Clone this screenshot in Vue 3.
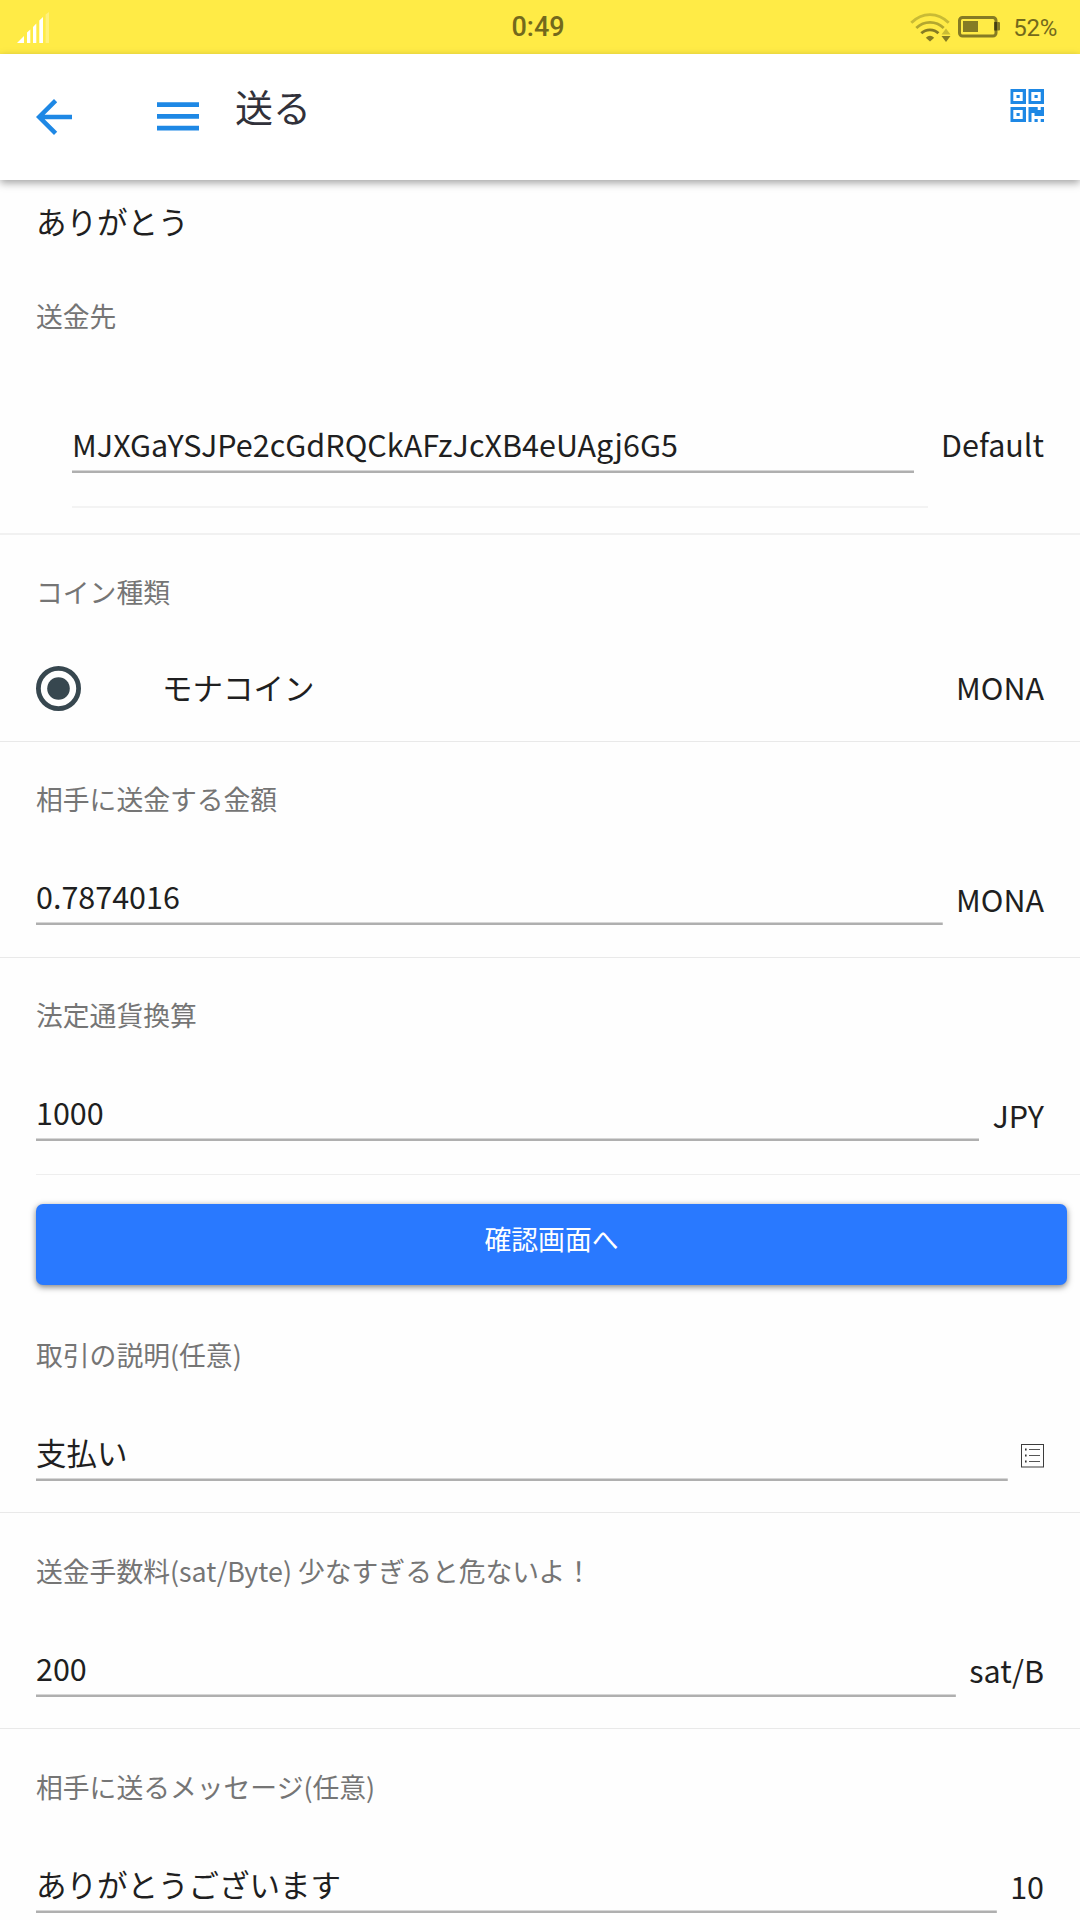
<script setup>
const more = [
  { label: '取引の説明(任意)', value: '支払い', icon: true },
  { label: '送金手数料(sat/Byte) 少なすぎると危ないよ！', value: '200', unit: 'sat/B' },
  { label: '相手に送るメッセージ(任意)', value: 'ありがとうございます', unit: '10' },
]
const amounts = [
  { label: '相手に送金する金額', value: '0.7874016', unit: 'MONA' },
  { label: '法定通貨換算', value: '1000', unit: 'JPY', inset: true },
]
</script>

<template>
  <div class="page">
    <div class="status">
      <svg class="signal" width="34" height="32" viewBox="0 0 34 32">
        <g fill="#fff">
          <path d="M0 31L7 24V31Z" />
          <path d="M10 20.5L13.3 17.5V31H10Z" />
          <path d="M16 15L19.3 11.5V31H16Z" />
          <path d="M22.3 8.5L26 5V31H22.3Z" />
          <path d="M28.6 2.5L32 0V31H28.6Z" opacity=".3" />
        </g>
      </svg>
      <span class="clock">0:49</span>
      <div class="status-right">
        <svg width="41" height="30" viewBox="0 0 41 30" fill="none" stroke="#857b24">
          <path d="M1.3 9.8C12 -1.2 28 -1.2 38.7 9.8" stroke-width="2.8" stroke="#c9bb35" />
          <path d="M6.3 15C14 7.4 26 7.4 33.7 15" stroke-width="2.8" stroke="#b3a72f" />
          <path d="M11.3 20.3C16 15.7 24 15.7 28.4 20.3" stroke-width="2.8" />
          <path d="M15.8 24.7Q20 21 24.2 24.7L20 28.6Z" fill="#857b24" stroke="none" />
          <path d="M31.5 21.5L36 15.5L40.5 21.5Z" fill="#c9bb35" stroke="none" />
          <path d="M31.5 23H40.5L36 29Z" fill="#857b24" stroke="none" />
        </svg>
        <svg class="battery" width="43" height="22" viewBox="0 0 43 22">
          <rect x="1.5" y="1.5" width="36.5" height="18.5" rx="3" fill="none" stroke="#857b24" stroke-width="3" />
          <rect x="5" y="5" width="15" height="11" fill="#857b24" />
          <rect x="36.3" y="6" width="5.7" height="8.5" rx="1" fill="#857b24" />
          <rect x="36.3" y="6" width="2.7" height="8.5" fill="#453f12" />
        </svg>
        <span class="pct">52%</span>
      </div>
    </div>

    <header class="bar">
      <svg class="back" width="36" height="36" viewBox="0 0 36 36">
        <path d="M36 15.75V20.25H8.6L21.2 32.8L18 36L0 18L18 0L21.2 3.2L8.6 15.75Z" fill="#1e88e5" />
      </svg>
      <svg class="menu" width="42" height="29" viewBox="0 0 42 29">
        <path d="M0 .3H42V5H0ZM0 12H42V16.7H0ZM0 23.8H42V28.5H0Z" fill="#1e88e5" />
      </svg>
      <h1>送る</h1>
      <svg class="qr" width="34" height="33" viewBox="0 0 34 33" fill="#1e88e5">
        <path fill-rule="evenodd" d="M.5 0H16V15H.5ZM3.3 3V12H12.7V3Z" />
        <path fill-rule="evenodd" d="M18.5 0H34V15H18.5ZM21.3 3V12H30.7V3Z" />
        <path fill-rule="evenodd" d="M.5 18H16V33H.5ZM3.3 21V30H12.7V21Z" />
        <path d="M6.5 6H9.7V9H6.5ZM24.5 6H27.7V9H24.5ZM6.5 24H9.7V27H6.5Z" />
        <path d="M18.5 18H27.7V21H30.7V18H34V27H24.5V24H21.5V33H18.5ZM24.5 30H27.7V33H24.5ZM30.7 30H34V33H30.7Z" />
      </svg>
    </header>

    <p class="name">ありがとう</p>

    <section class="dest">
      <div class="label">送金先</div>
      <div class="dest-row">
        <div class="dest-cell"><div class="input address">MJXGaYSJPe2cGdRQCkAFzJcXB4eUAgj6G5</div></div>
        <span class="default">Default</span>
      </div>
    </section>

    <section class="coin">
      <div class="label">コイン種類</div>
      <div class="coin-row">
        <svg width="45" height="45" viewBox="0 0 45 45">
          <circle cx="22.5" cy="22.5" r="20.1" fill="none" stroke="#37474f" stroke-width="4.8" />
          <circle cx="22.5" cy="22.5" r="11.3" fill="#37474f" />
        </svg>
        <span class="coin-name">モナコイン</span>
        <span class="coin-unit">MONA</span>
      </div>
    </section>

    <section v-for="f in amounts" :key="f.label" class="field amount" :class="{ inset: f.inset }">
      <div class="label">{{ f.label }}</div>
      <div class="row">
        <div class="input">{{ f.value }}</div>
        <span class="unit">{{ f.unit }}</span>
      </div>
    </section>

    <button class="confirm">確認画面へ</button>

    <section v-for="f in more" :key="f.label" class="field">
      <div class="label">{{ f.label }}</div>
      <div class="row">
        <div class="input">{{ f.value }}</div>
        <svg v-if="f.icon" class="list" width="23" height="24" viewBox="0 0 23 24">
          <rect x=".5" y=".5" width="22" height="22.5" fill="none" stroke="#3c3c3c" />
          <path d="M8 5.5H19M8 11.5H19M8 17.5H19" stroke="#555" stroke-width="1.2" />
          <path d="M4 5.5H5.6M4 11.5H5.6M4 17.5H5.6" stroke="#333" stroke-width="2" />
        </svg>
        <span v-else class="unit">{{ f.unit }}</span>
      </div>
    </section>
  </div>
</template>

<style>
body { background: #fefefe; }
</style>

<style scoped>
.page {
  width: 1080px;
  height: 1920px;
  overflow: hidden;
  background: #fefefe;
  color: #1f1f21;
  font-family: "Noto Sans CJK JP", sans-serif;
  font-size: 30.5px;
  line-height: 36px;
  display: flex;
  flex-direction: column;
}
.page > * { flex: none; box-sizing: border-box; }
.status {
  height: 54px;
  background: #ffeb46;
  display: grid;
  grid-template-columns: 1fr auto 1fr;
  font-family: Roboto, sans-serif;
}
.signal { margin: 12px 0 0 17px; }
.clock { font-size: 27px; font-weight: 500; color: #73691c; line-height: 55px; margin-right: 4px; }
.status-right { display: flex; justify-content: flex-end; padding-right: 23px; }
.status-right svg:first-child { margin-top: 13px; }
.battery { margin: 16px 0 0 7px; }
.pct { font-size: 24px; line-height: 56px; color: #73691c; margin-left: 12px; letter-spacing: -.3px; }
.bar {
  height: 126px;
  display: flex;
  background: #fff;
  padding: 0 36px;
  box-shadow: 0 3px 8px rgba(0, 0, 0, .36);
}
.back { margin-top: 45px; }
.menu { margin: 48px 0 0 85px; }
h1 { margin: 32px 0 0 36px; font-size: 38px; line-height: 40px; font-weight: 400; color: #31313a; }
.qr { margin: 35px 0 0 auto; }
.name { margin: 23px 0 1px; padding-left: 36px; height: 36px; }
.label { font-size: 26.8px; padding-left: 36px; color: #757575; }
.input {
  flex: 1;
  height: 48px;
  padding-top: 1px;
  box-sizing: border-box;
  background: linear-gradient(#d6d6d6 1px, #afafaf 1px) bottom / 100% 3px no-repeat;
}
.address { letter-spacing: .03px; }
.dest { height: 295px; padding-top: 58px; border-bottom: 2px solid #f1f1f1; }
.dest-row { display: flex; padding: 91px 36px 0 72px; }
.dest-cell { flex: 1; height: 83px; padding-right: 13.5px; border-bottom: 2px solid #f3f3f3; box-sizing: border-box; }
.default { margin: 1px 0 0 13.5px; }
.coin { height: 207px; padding-top: 39px; border-bottom: 1px solid #e9e9e9; }
.coin-row { display: flex; padding: 56px 36px 0; }
.coin-name { margin: 3px 0 0 81px; }
.coin-unit { margin: 3px 0 0 auto; }
.field { height: 216px; padding-top: 40px; border-bottom: 1px solid #e9e9e9; }
.amount { padding-top: 39px; }
.row { display: flex; gap: 13.5px; padding: 60px 36px 0; }
.unit { margin-top: 3px; }
.amount .unit { margin-top: 4px; }
.list { margin-top: 11px; }
.inset { height: 217px; margin-left: 36px; border-bottom-color: #eee; }
.inset .label { padding-left: 0; }
.inset .row { padding-left: 0; }
.confirm {
  margin: 29px 13px 12px 36px;
  height: 81px;
  border: 0;
  border-radius: 7px;
  background: #2979ff;
  color: #fff;
  font: 26.8px/36px "Noto Sans CJK JP", sans-serif;
  padding: 0 0 12px;
  box-shadow: 0 2px 6px rgba(0, 0, 0, .5);
}
</style>
